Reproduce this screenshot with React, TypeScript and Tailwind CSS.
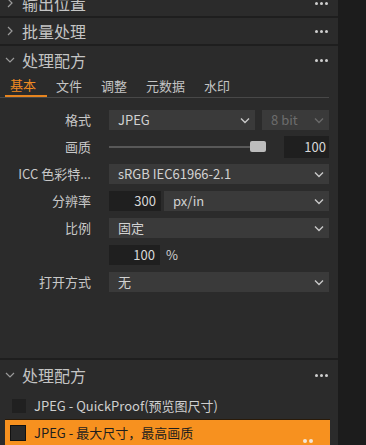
import React from "react";

const font = { fontFamily: '"Noto Sans CJK SC", "Noto Sans", sans-serif' };

function Chevron({ open }: { open: boolean }) {
  return (
    <svg width="10" height="10" viewBox="0 0 10 10" className="shrink-0">
      {open ? (
        <polyline points="1,3 5,7 9,3" fill="none" stroke="#9a9a9a" strokeWidth="1.2" />
      ) : (
        <polyline points="3,1 7,5 3,9" fill="none" stroke="#9a9a9a" strokeWidth="1.2" />
      )}
    </svg>
  );
}

function Dots() {
  return (
    <div className="flex gap-[2px]">
      <span className="w-[3px] h-[3px] rounded-full bg-[#cfcfcf]" />
      <span className="w-[3px] h-[3px] rounded-full bg-[#cfcfcf]" />
      <span className="w-[3px] h-[3px] rounded-full bg-[#cfcfcf]" />
    </div>
  );
}

function Header({ title, open, className = "" }: { title: string; open: boolean; className?: string }) {
  return (
    <div className={`flex items-center h-[28px] pl-[5px] pr-[10px] ${className}`}>
      <Chevron open={open} />
      <span className="ml-[7px] text-[16px] text-[#c4c4c4] leading-none">{title}</span>
      <div className="ml-auto">
        <Dots />
      </div>
    </div>
  );
}

function Caret({ dim = false }: { dim?: boolean }) {
  return (
    <svg width="10" height="7" viewBox="0 0 10 7" className="shrink-0">
      <polyline
        points="1,1.5 5,5.5 9,1.5"
        fill="none"
        stroke={dim ? "#6a6a6a" : "#c8c8c8"}
        strokeWidth="1.4"
      />
    </svg>
  );
}

function Select({ value, className = "", dim = false }: { value: string; className?: string; dim?: boolean }) {
  return (
    <div
      className={`h-[20px] bg-[#3a3a3a] flex items-center pl-[9px] pr-[5px] text-[13px] ${
        dim ? "text-[#6c6c6c]" : "text-[#d2d2d2]"
      } ${className}`}
    >
      <span className="truncate">{value}</span>
      <div className="ml-auto pl-2">
        <Caret dim={dim} />
      </div>
    </div>
  );
}

function Row({ label, children }: { label: string; children: React.ReactNode }) {
  return (
    <div className="flex items-center h-[20px]">
      <div className="w-[91px] text-right text-[13px] text-[#c8c8c8] whitespace-nowrap">{label}</div>
      <div className="ml-[18px] w-[220px] flex items-center">{children}</div>
    </div>
  );
}

const tabs = ["基本", "文件", "调整", "元数据", "水印"];

export default function App() {
  return (
    <div className="w-[366px] h-[445px] overflow-hidden flex bg-[#1c1c1c]" style={font}>
      <div className="w-[338px] bg-[#2b2b2b] flex flex-col">
        <Header title="输出位置" open={false} className="-mt-[10px] border-b-2 border-[#1e1e1e]" />
        <Header title="批量处理" open={false} className="border-b-2 border-[#1e1e1e]" />

        <div className="h-[314px] flex flex-col border-b-2 border-[#1e1e1e]">
          <Header title="处理配方" open={true} />
          <div className="flex h-[24px] mr-[9px] border-b border-[#484848] text-[13px]">
            {tabs.map((t, i) => (
              <div
                key={t}
                className={`flex items-center ${
                  i === 0
                    ? "ml-[5px] pl-[5px] w-[42px] border-b-2 border-[#e7841f] text-[#f08a22]"
                    : i === 1
                    ? "ml-[4px] px-[5px] text-[#c4c4c4]"
                    : "ml-[9px] px-[5px] text-[#c4c4c4]"
                }`}
              >
                {t}
              </div>
            ))}
          </div>

          <div className="flex flex-col gap-[7px] pt-[12px]">
            <Row label="格式">
              <Select value="JPEG" className="w-[146px]" />
              <Select value="8 bit" dim className="w-[67px] ml-[7px]" />
            </Row>
            <Row label="画质">
              <div className="relative w-[157px] h-[20px] flex items-center">
                <div className="w-[143px] h-[2px] bg-[#585858]" />
                <div className="absolute left-[141px] top-[4px] w-[16px] h-[11px] rounded-[2px] bg-[#bcbcbc]" />
              </div>
              <div className="ml-auto w-[45px] h-[22px] bg-[#1f1f1f] flex items-center justify-end pr-[3px] text-[13px] text-[#d8d8d8]">
                100
              </div>
            </Row>
            <Row label="ICC 色彩特...">
              <Select value="sRGB IEC61966-2.1" className="w-[220px]" />
            </Row>
            <Row label="分辨率">
              <div className="w-[52px] h-[20px] bg-[#1f1f1f] flex items-center justify-end pr-[5px] text-[13px] text-[#d8d8d8]">
                300
              </div>
              <Select value="px/in" className="ml-[3px] flex-1" />
            </Row>
            <Row label="比例">
              <Select value="固定" className="w-[220px]" />
            </Row>
            <Row label="">
              <div className="w-[51px] h-[20px] bg-[#1f1f1f] flex items-center justify-end pr-[5px] text-[13px] text-[#d8d8d8]">
                100
              </div>
              <span className="ml-[6px] text-[13px] text-[#d2d2d2]">%</span>
            </Row>
            <Row label="打开方式">
              <Select value="无" className="w-[220px]" />
            </Row>
          </div>
        </div>

        <Header title="处理配方" open={true} className="mt-[1px]" />
        <div className="flex items-center h-[20px] mt-[7px] pl-[12px] text-[13px] text-[#cfcfcf]">
          <span className="w-[14px] h-[14px] bg-[#202020]" />
          <span className="ml-[8px]">JPEG - QuickProof(预览图尺寸)</span>
        </div>
        <div className="relative ml-[5px] mr-[8px] mt-[3px] h-[26px] bg-[#f7911f] border-t border-[#2a1a08] flex items-center pl-[5px] text-[13px] text-[#1e1e1e]">
          <span className="w-[16px] h-[16px] bg-[#2a2a2a] border border-[#111]" />
          <span className="ml-[8px]">JPEG - 最大尺寸，最高画质</span>
          <div className="absolute left-[298px] top-[19px] flex gap-[2px]">
            <span className="w-[4px] h-[4px] rounded-full bg-[#f3e6d6]" />
            <span className="w-[4px] h-[4px] rounded-full bg-[#f3e6d6]" />
          </div>
        </div>
      </div>
      <div className="flex-1" />
    </div>
  );
}
